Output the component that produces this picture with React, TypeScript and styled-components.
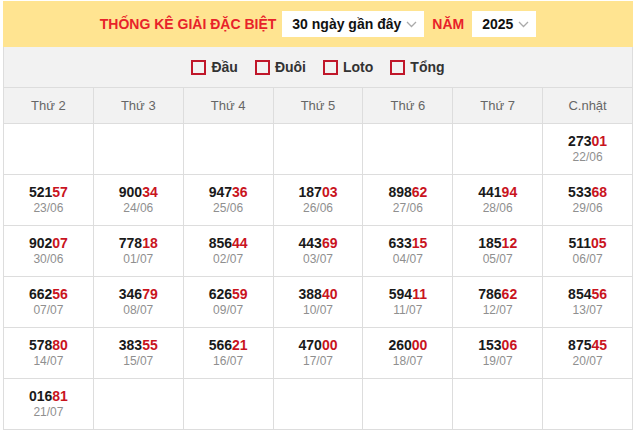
import React from "react";
import styled, { createGlobalStyle } from "styled-components";

const Global = createGlobalStyle`
  html, body { margin: 0; padding: 0; background: #fff; }
  body { font-family: "Liberation Sans", Arial, sans-serif; }
`;

const Wrapper = styled.div`
  width: 630px;
  margin: 1px 1px 0 3px;
`;

const TopBar = styled.div`
  height: 46px;
  background: #ffe491;
  display: flex;
  align-items: center;
  justify-content: center;
  gap: 6px;
`;

const Title = styled.span<{ $mx?: number }>`
  color: #e8222a;
  font-weight: bold;
  font-size: 14px;
  margin: 0 ${(p) => p.$mx ?? 0}px;
`;

const Select = styled.div<{ $w: number }>`
  width: ${(p) => p.$w}px;
  height: 26px;
  box-sizing: border-box;
  background: #fff;
  display: flex;
  align-items: center;
  justify-content: space-between;
  padding: 0 7px 0 10px;
  font-weight: bold;
  font-size: 14px;
  color: #111;
`;

const Chevron = () => (
  <svg width="11" height="7" viewBox="0 0 11 7">
    <polyline points="1,1 5.5,5.5 10,1" fill="none" stroke="#aaa" strokeWidth="1.3" />
  </svg>
);

const FilterRow = styled.div`
  height: 40px;
  background: #f2f2f2;
  border-left: 1px solid #ddd;
  border-right: 1px solid #ddd;
  border-bottom: 1px solid #ddd;
  display: flex;
  align-items: center;
  justify-content: center;
  gap: 17px;
`;

const Check = styled.label`
  display: flex;
  align-items: center;
  gap: 5px;
  font-weight: bold;
  font-size: 14px;
  color: #333;
`;

const Box = styled.span`
  width: 15px;
  height: 15px;
  box-sizing: border-box;
  border: 2px solid #c0172a;
  display: inline-block;
`;

const Grid = styled.div`
  display: grid;
  grid-template-columns: repeat(7, 1fr);
  border-left: 1px solid #ddd;
`;

const HeadCell = styled.div`
  height: 35px;
  background: #f2f2f2;
  border-right: 1px solid #ddd;
  border-bottom: 1px solid #ddd;
  display: flex;
  align-items: center;
  justify-content: center;
  font-size: 13px;
  color: #666;
`;

const Cell = styled.div`
  height: 50px;
  border-right: 1px solid #ddd;
  border-bottom: 1px solid #ddd;
  display: flex;
  flex-direction: column;
  align-items: center;
  justify-content: center;
`;

const Num = styled.div`
  font-weight: bold;
  font-size: 14px;
  line-height: 17px;
  color: #1a1a1a;
`;

const Tail = styled.span`
  color: #c9141e;
`;

const DateText = styled.div`
  font-size: 12px;
  line-height: 15px;
  color: #8f8f8f;
`;

const days = ["Thứ 2", "Thứ 3", "Thứ 4", "Thứ 5", "Thứ 6", "Thứ 7", "C.nhật"];

type Entry = [string, string] | null;

const rows: Entry[][] = [
  [null, null, null, null, null, null, ["27301", "22/06"]],
  [["52157", "23/06"], ["90034", "24/06"], ["94736", "25/06"], ["18703", "26/06"], ["89862", "27/06"], ["44194", "28/06"], ["53368", "29/06"]],
  [["90207", "30/06"], ["77818", "01/07"], ["85644", "02/07"], ["44369", "03/07"], ["63315", "04/07"], ["18512", "05/07"], ["51105", "06/07"]],
  [["66256", "07/07"], ["34679", "08/07"], ["62659", "09/07"], ["38840", "10/07"], ["59411", "11/07"], ["78662", "12/07"], ["85456", "13/07"]],
  [["57880", "14/07"], ["38355", "15/07"], ["56621", "16/07"], ["47000", "17/07"], ["26000", "18/07"], ["15306", "19/07"], ["87545", "20/07"]],
  [["01681", "21/07"], null, null, null, null, null, null],
];

export default function App() {
  return (
    <>
      <Global />
      <Wrapper>
        <TopBar>
          <Title>THỐNG KÊ GIẢI ĐẶC BIỆT</Title>
          <Select $w={142}>
            <span>30 ngày gần đây</span>
            <Chevron />
          </Select>
          <Title $mx={2}>NĂM</Title>
          <Select $w={64}>
            <span>2025</span>
            <Chevron />
          </Select>
        </TopBar>
        <FilterRow>
          {["Đầu", "Đuôi", "Loto", "Tổng"].map((l) => (
            <Check key={l}>
              <Box />
              {l}
            </Check>
          ))}
        </FilterRow>
        <Grid>
          {days.map((d) => (
            <HeadCell key={d}>{d}</HeadCell>
          ))}
          {rows.flatMap((r, ri) =>
            r.map((e, ci) => (
              <Cell key={`${ri}-${ci}`}>
                {e && (
                  <>
                    <Num>
                      {e[0].slice(0, 3)}
                      <Tail>{e[0].slice(3)}</Tail>
                    </Num>
                    <DateText>{e[1]}</DateText>
                  </>
                )}
              </Cell>
            ))
          )}
        </Grid>
      </Wrapper>
    </>
  );
}
